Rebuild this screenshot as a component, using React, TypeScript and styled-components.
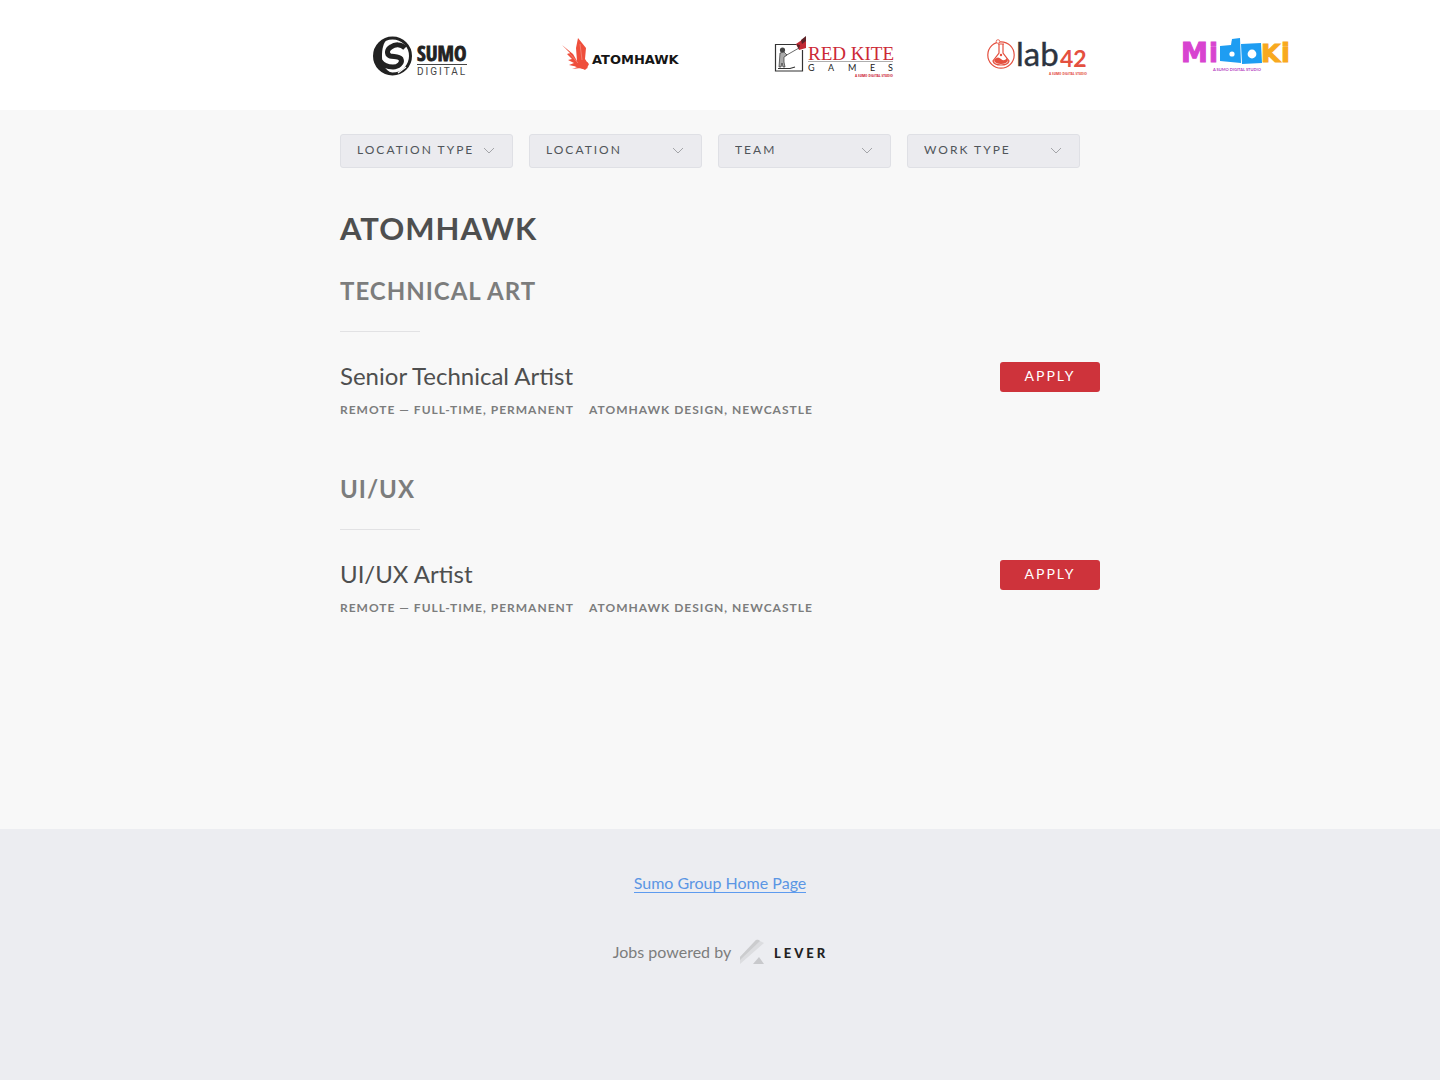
import React from "react";
import styled, { createGlobalStyle } from "styled-components";

const GlobalStyle = createGlobalStyle`
  *, *::before, *::after { box-sizing: border-box; }
  body {
    margin: 0;
    background: #ecedf1;
    color: #4e4f4f;
    font-family: Lato, "Open Sans", sans-serif;
    font-size: 16px;
    line-height: 24px;
  }
`;

const Page = styled.div`
  display: flex;
  flex-direction: column;
  min-height: 100vh;
  overflow-x: hidden;
`;

const Container = styled.div`
  width: 100%;
  max-width: 760px;
  margin: 0 auto;
`;

const Header = styled.header`
  background: #ffffff;
  padding: 30px 0;
`;

const LogoStrip = styled(Container)`
  display: flex;
  gap: 94px;
  padding-left: 32px;
`;

const LogoArt = styled.svg`
  display: block;
  flex: none;
  overflow: visible;
`;

const Main = styled.main`
  background: #f8f8f8;
  padding: 24px 0 183px;
`;

const Filters = styled.form`
  display: flex;
  gap: 16px;
  margin-bottom: 40px;
`;

const Filter = styled.label`
  display: grid;
  flex: none;
  width: 173px;
  align-items: center;

  > * { grid-area: 1 / 1; }
`;

const FilterSelect = styled.select`
  appearance: none;
  width: 100%;
  height: 34px;
  padding: 0 16px 4px;
  border: 1px solid #dfe0e5;
  border-radius: 3px;
  background: #ebebef;
  color: #50555a;
  font-family: inherit;
  font-size: 12px;
  letter-spacing: 2px;
  text-transform: uppercase;
`;

const Chevron = styled.svg`
  justify-self: end;
  margin: 0 18px 2px 0;
  pointer-events: none;
`;

const CompanyName = styled.h1`
  margin: 0 0 26px;
  font-size: 31px;
  line-height: 40px;
  font-weight: 700;
  letter-spacing: 1px;
  text-transform: uppercase;
`;

const Group = styled.section`
  & + & { margin-top: 24px; }
`;

const GroupTitle = styled.h2`
  margin: 0;
  color: #7c7d7d;
  font-size: 24px;
  line-height: 34px;
  font-weight: 700;
  letter-spacing: 1px;
  text-transform: uppercase;

  &::after {
    content: "";
    display: block;
    width: 80px;
    margin: 23px 0 30px;
    border-top: 1px solid #e2e2e4;
  }
`;

const Posting = styled.article`
  display: flex;
  justify-content: space-between;
  align-items: flex-start;
  padding-bottom: 26px;
`;

const PostingTitle = styled.h3`
  margin: 0;
  font-size: 24px;
  line-height: 28px;
  font-weight: 400;
`;

const Tags = styled.div`
  display: flex;
  gap: 15px;
  margin-top: 8px;
  color: #7c7d7d;
  font-size: 12px;
  line-height: 24px;
  font-weight: 700;
  letter-spacing: 1px;
  text-transform: uppercase;
`;

const ApplyLink = styled.a`
  width: 100px;
  padding-bottom: 2px;
  border-radius: 3px;
  background: #ce333b;
  color: #ffffff;
  font-size: 14px;
  line-height: 28px;
  letter-spacing: 2px;
  text-align: center;
  text-decoration: none;
  text-transform: uppercase;
`;

const Footer = styled.footer`
  display: flex;
  flex: 1;
  flex-direction: column;
  align-items: center;
  gap: 46px;
  padding: 45px 0 100px;
  background: #ecedf1;
`;

const HomeLink = styled.a`
  border-bottom: 1px solid #5d9bef;
  color: #5b96e4;
  line-height: 18px;
  text-decoration: none;
`;

const PoweredBy = styled.a`
  display: flex;
  align-items: center;
  gap: 8px;
  color: #7c7d7d;
  line-height: 26px;
  text-decoration: none;
`;

const SumoLogo = () => (
  <LogoArt width="95" height="50" viewBox="0 0 95 50" role="img" aria-label="Sumo Digital">
    <circle cx="20.5" cy="26" r="18" fill="#fff" stroke="#222" strokeWidth="3" />
    <path d="M16 8C3 12-1 26 5 36c4 5 9 7 15 7-7-3-10-9-10-16C10 19 11 13 16 8z" fill="#222" />
    <path d="M33 18c-4-4-10-4-14-1-4 2-5 7-1 9 4 1 9 0 11 3 2 4-3 8-8 8-6 0-10-2-13-6" fill="none" stroke="#222" strokeWidth="5" />
    <path d="M26 43l8-6" stroke="#fff" strokeWidth="1.200" />
    <text x="45" y="31" fill="#222" stroke="#222" strokeWidth=".8" fontFamily="'Liberation Sans Narrow', 'Open Sans Condensed', 'DejaVu Sans Condensed', Lato, sans-serif" fontSize="21" fontWeight="700">SUMO</text>
    <path d="M45 34.500h50" stroke="#444" strokeWidth="1" />
    <text x="45" y="45" fill="#444" fontFamily="Roboto, sans-serif" fontSize="10" letterSpacing="2">DIGITAL</text>
  </LogoArt>
);

const AtomhawkLogo = () => (
  <LogoArt width="120" height="50" viewBox="0 0 120 50" role="img" aria-label="Atomhawk">
    <path d="M1 15l11 9 4 7-1-13 2-10 4 5 4 5-1 11 2 3 2 2-2 4-2 2-4-2-9 1 6-2-9-2 5-2-6-3 4-1-5-5 3-1-5-5z" fill="#ef4f3c" />
    <path d="M14 37l6-4 7-1-3 4 3 2-5 1z" fill="#ef4f3c" />
    <path d="M8 23l9 10M19 14l2 16" fill="none" stroke="#fff" strokeWidth=".6" opacity=".45" />
    <text x="31" y="34" fill="#151515" fontFamily="'DejaVu Sans', sans-serif" fontSize="13" fontWeight="700">ATOMHAWK</text>
  </LogoArt>
);

const RedKiteLogo = () => (
  <LogoArt width="118" height="50" viewBox="0 0 118 50" role="img" aria-label="Red Kite Games">
    <path d="M21 14.500H.5v26.500h27V20" fill="none" stroke="#333" strokeWidth="1.200" />
    <path d="M21 14l10-7v11l-7 2z" fill="#c22a34" />
    <path d="M26 10l5-4v5l-4 3zM21 14l4 1-1 4z" fill="#5d2227" />
    <path d="M10 26l14-8" stroke="#444" strokeWidth=".8" />
    <circle cx="7.500" cy="20" r="2.600" fill="#444" />
    <path d="M5 23l4-1 3 3-3 2v5l1 5H8l-1-4-1 4H4z" fill="#aaa" stroke="#333" strokeWidth=".7" />
    <path d="M3 38.500h12l5-1.500" stroke="#333" strokeWidth="1.200" fill="none" />
    <text x="33" y="30" fill="#cc2936" fontFamily="'Liberation Serif', serif" fontSize="19">RED KITE</text>
    <path d="M33 31.500h85" stroke="#999" strokeWidth=".8" />
    <text y="41" fill="#222" fontFamily="Lato, sans-serif" fontSize="9">
      <tspan x="33">G</tspan><tspan x="53">A</tspan><tspan x="73">M</tspan><tspan x="95">E</tspan><tspan x="113">S</tspan>
    </text>
    <text x="118" y="47" textAnchor="end" fill="#cc2936" fontFamily="'Open Sans Condensed', 'Liberation Sans Narrow', Lato, sans-serif" fontSize="4" fontWeight="700">A SUMO DIGITAL STUDIO</text>
  </LogoArt>
);

const Lab42Logo = () => (
  <LogoArt width="100" height="50" viewBox="0 0 100 50" role="img" aria-label="Lab42">
    <circle cx="14" cy="25" r="13.200" fill="none" stroke="#e4503f" strokeWidth="1.200" />
    <path d="M11 14h6M12 14v9l-6 8q1 4 8 4t8-4l-6-8v-9" fill="#fff" stroke="#e4503f" strokeWidth="1.200" />
    <path d="M8 29q3-3 6 0t6-1l1 3q-2 3-7 3t-7-3z" fill="#e4503f" />
    <circle cx="11" cy="11.500" r="1.800" fill="#fff" stroke="#e4503f" strokeWidth=".8" />
    <circle cx="14" cy="25" r="1.200" fill="#e4503f" />
    <text x="29" y="36" fill="#2c3440" stroke="#2c3440" strokeWidth=".4" fontFamily="Lato, sans-serif" fontSize="33">lab</text>
    <text x="73" y="37" fill="#e4503f" fontFamily="Lato, sans-serif" fontSize="23" fontWeight="700">42</text>
    <text x="100" y="45" textAnchor="end" fill="#e4503f" fontFamily="'Open Sans Condensed', 'Liberation Sans Narrow', Lato, sans-serif" fontSize="4" fontWeight="700">A SUMO DIGITAL STUDIO</text>
  </LogoArt>
);

const MidokiLogo = () => (
  <LogoArt width="110" height="50" viewBox="0 0 110 50" role="img" aria-label="Midoki">
    <g fontFamily="'DejaVu Sans', sans-serif" fontWeight="700">
      <text x="0" y="32" fill="#d844d0" stroke="#d844d0" strokeWidth="1" fontSize="27">M</text>
      <text x="28" y="32" fill="#d844d0" stroke="#d844d0" strokeWidth="1" fontSize="26">i</text>
      <path d="M39 16l11-1 1-6 8-1 1 25-21-2zM60 14l20-1 1 20-20 1z" fill="#1e9df2" />
      <text x="39" y="31" fill="#1e9df2" fontSize="26">d</text>
      <text x="62" y="31" fill="#1e9df2" fontSize="26">o</text>
      <circle cx="51" cy="24" r="2.600" fill="#fff" />
      <circle cx="71" cy="24" r="4.400" fill="#fff" />
      <text x="80" y="32" fill="#f8a91f" stroke="#f8a91f" strokeWidth="1" fontSize="25">K</text>
      <text x="100" y="32" fill="#f8a91f" stroke="#f8a91f" strokeWidth="1" fontSize="26">i</text>
    </g>
    <text x="32" y="41" fill="#b43dc0" fontFamily="Lato, sans-serif" fontSize="4" fontWeight="700">A SUMO DIGITAL STUDIO</text>
  </LogoArt>
);

const LeverLogo = () => (
  <LogoArt width="88" height="26" viewBox="0 0 88 26" role="img" aria-label="Lever">
    <path d="M1 18L17 1q2-1 4 1l4 2L1 25z" fill="#dcdde0" />
    <path d="M1 18L17 1q2-1 4 1L1 21z" fill="#cbccce" />
    <path d="M14 25l6-7 5 7z" fill="#c8c9cc" />
    <text x="35" y="19" fill="#222" fontFamily="Lato, sans-serif" fontSize="13" fontWeight="900" letterSpacing="3">LEVER</text>
  </LogoArt>
);

const filters = ["Location type", "Location", "Team", "Work type"];

const groups = [
  { team: "Technical Art", title: "Senior Technical Artist" },
  { team: "UI/UX", title: "UI/UX Artist" },
];

export default function App() {
  return (
    <Page>
      <GlobalStyle />
      <Header>
        <LogoStrip>
          <SumoLogo />
          <AtomhawkLogo />
          <RedKiteLogo />
          <Lab42Logo />
          <MidokiLogo />
        </LogoStrip>
      </Header>
      <Main>
        <Container>
          <Filters>
            {filters.map((name) => (
              <Filter key={name}>
                <FilterSelect aria-label={name}>
                  <option>{name}</option>
                </FilterSelect>
                <Chevron width="12" height="8" viewBox="0 0 12 8" aria-hidden="true">
                  <path d="M1 2l5 5 5-5" fill="none" stroke="#a3a4a8" />
                </Chevron>
              </Filter>
            ))}
          </Filters>
          <CompanyName>Atomhawk</CompanyName>
          {groups.map(({ team, title }) => (
            <Group key={team}>
              <GroupTitle>{team}</GroupTitle>
              <Posting>
                <div>
                  <PostingTitle>{title}</PostingTitle>
                  <Tags>
                    <span>Remote — Full-time, Permanent</span>
                    <span>Atomhawk Design, Newcastle</span>
                  </Tags>
                </div>
                <ApplyLink href="#apply">Apply</ApplyLink>
              </Posting>
            </Group>
          ))}
        </Container>
      </Main>
      <Footer>
        <HomeLink href="#home">Sumo Group Home Page</HomeLink>
        <PoweredBy href="#lever">
          Jobs powered by
          <LeverLogo />
        </PoweredBy>
      </Footer>
    </Page>
  );
}
